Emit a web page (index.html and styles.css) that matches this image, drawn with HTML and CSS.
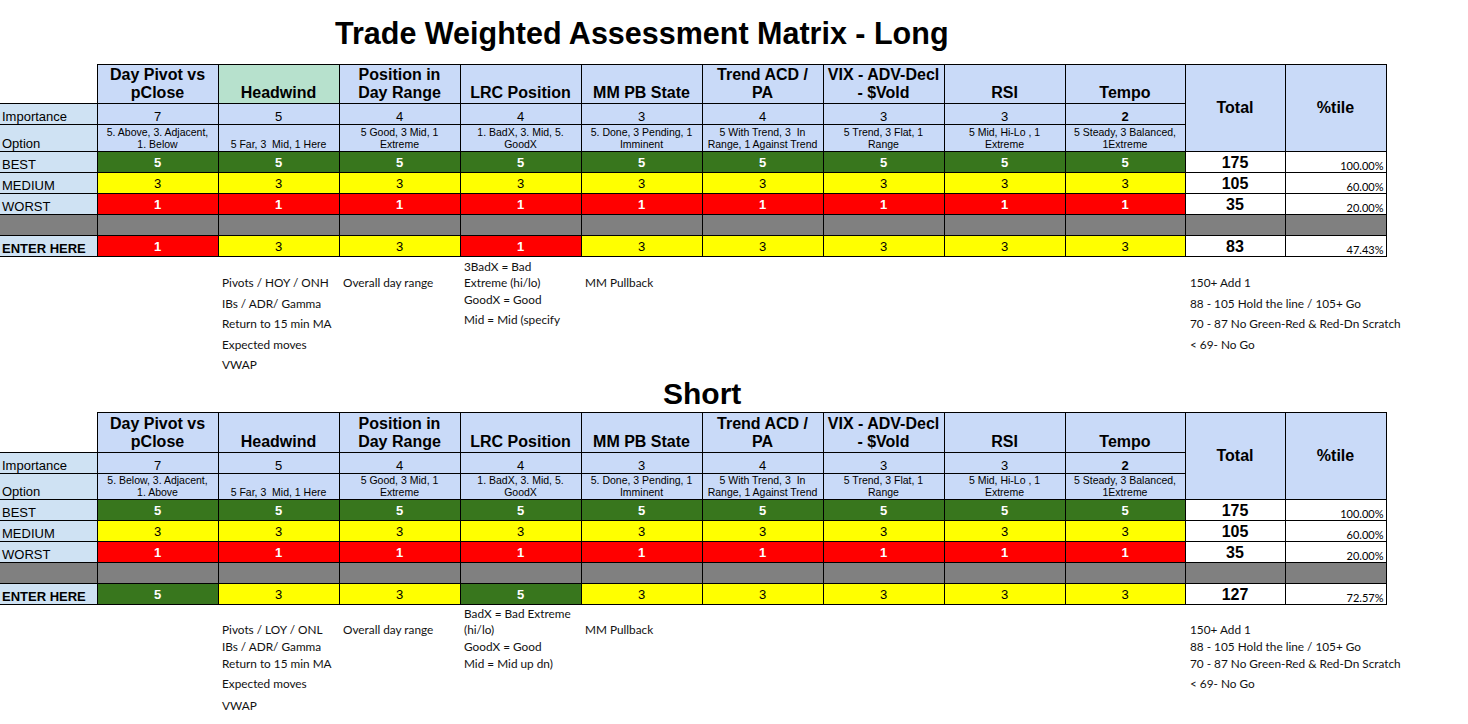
FILE: index.html
```html
<!DOCTYPE html>
<html lang="en">
<head>
<meta charset="utf-8">
<title>Trade Weighted Assessment Matrix</title>
<link rel="stylesheet" href="styles.css">
</head>
<body>
<h1 class="title title-long">Trade Weighted Assessment Matrix - Long</h1>

<table class="matrix">
  <colgroup>
    <col class="c-label"><col class="c-data"><col class="c-data"><col class="c-data"><col class="c-data"><col class="c-data"><col class="c-data"><col class="c-data"><col class="c-data"><col class="c-tempo"><col class="c-total"><col class="c-pct">
  </colgroup>
  <tr class="r-head">
    <th class="corner"></th>
    <th>Day Pivot vs<br>pClose</th>
    <th class="head-green">Headwind</th>
    <th>Position in<br>Day Range</th>
    <th>LRC Position</th>
    <th>MM PB State</th>
    <th>Trend ACD /<br>PA</th>
    <th>VIX - ADV-Decl<br>- $Vold</th>
    <th>RSI</th>
    <th>Tempo</th>
    <th class="tot-head" rowspan="3">Total</th>
    <th class="tot-head" rowspan="3">%tile</th>
  </tr>
  <tr class="r-imp">
    <td class="lbl">Importance</td>
    <td>7</td><td>5</td><td>4</td><td>4</td><td>3</td><td>4</td><td>3</td><td>3</td><td class="strong">2</td>
  </tr>
  <tr class="r-opt">
    <td class="lbl">Option</td>
    <td>5. Above, 3. Adjacent,<br>1. Below</td>
    <td>5 Far, 3&nbsp; Mid, 1 Here</td>
    <td>5 Good, 3 Mid, 1<br>Extreme</td>
    <td>1. BadX, 3. Mid, 5.<br>GoodX</td>
    <td>5. Done, 3 Pending, 1<br>Imminent</td>
    <td>5 With Trend, 3&nbsp; In<br>Range, 1 Against Trend</td>
    <td>5 Trend, 3 Flat, 1<br>Range</td>
    <td>5 Mid, Hi-Lo , 1<br>Extreme</td>
    <td>5 Steady, 3 Balanced,<br>1Extreme</td>
  </tr>
  <tr class="r-val">
    <td class="lbl">BEST</td>
    <td class="v-g">5</td><td class="v-g">5</td><td class="v-g">5</td><td class="v-g">5</td><td class="v-g">5</td><td class="v-g">5</td><td class="v-g">5</td><td class="v-g">5</td><td class="v-g">5</td>
    <td class="tot">175</td><td class="pct">100.00%</td>
  </tr>
  <tr class="r-val">
    <td class="lbl">MEDIUM</td>
    <td class="v-y">3</td><td class="v-y">3</td><td class="v-y">3</td><td class="v-y">3</td><td class="v-y">3</td><td class="v-y">3</td><td class="v-y">3</td><td class="v-y">3</td><td class="v-y">3</td>
    <td class="tot">105</td><td class="pct">60.00%</td>
  </tr>
  <tr class="r-val">
    <td class="lbl">WORST</td>
    <td class="v-r">1</td><td class="v-r">1</td><td class="v-r">1</td><td class="v-r">1</td><td class="v-r">1</td><td class="v-r">1</td><td class="v-r">1</td><td class="v-r">1</td><td class="v-r">1</td>
    <td class="tot">35</td><td class="pct">20.00%</td>
  </tr>
  <tr class="r-val r-gray">
    <td></td><td></td><td></td><td></td><td></td><td></td><td></td><td></td><td></td><td></td><td></td><td></td>
  </tr>
  <tr class="r-val">
    <td class="lbl lbl-strong">ENTER HERE</td>
    <td class="v-r">1</td><td class="v-y">3</td><td class="v-y">3</td><td class="v-r">1</td><td class="v-y">3</td><td class="v-y">3</td><td class="v-y">3</td><td class="v-y">3</td><td class="v-y">3</td>
    <td class="tot">83</td><td class="pct">47.43%</td>
  </tr>
</table>

<div class="notes notes-long">
  <div class="note c3 r1">Pivots / HOY / ONH</div>
  <div class="note c3 r2">IBs / ADR/ Gamma</div>
  <div class="note c3 r3">Return to 15 min MA</div>
  <div class="note c3 r4">Expected moves</div>
  <div class="note c3 r5">VWAP</div>
  <div class="note c4 r1">Overall day range</div>
  <div class="note c5 r1">3BadX = Bad<br>Extreme (hi/lo)</div>
  <div class="note c5 r2 lift">GoodX = Good</div>
  <div class="note c5 r3 lift">Mid = Mid (specify</div>
  <div class="note c6 r1">MM Pullback</div>
  <div class="note c11 r1">150+ Add 1</div>
  <div class="note c11 r2">88 - 105 Hold the line / 105+ Go</div>
  <div class="note c11 r3">70 - 87 No Green-Red &amp; Red-Dn Scratch</div>
  <div class="note c11 r4">&lt; 69- No Go</div>
</div>

<h2 class="title title-short">Short</h2>

<table class="matrix">
  <colgroup>
    <col class="c-label"><col class="c-data"><col class="c-data"><col class="c-data"><col class="c-data"><col class="c-data"><col class="c-data"><col class="c-data"><col class="c-data"><col class="c-tempo"><col class="c-total"><col class="c-pct">
  </colgroup>
  <tr class="r-head r-head-short">
    <th class="corner"></th>
    <th>Day Pivot vs<br>pClose</th>
    <th>Headwind</th>
    <th>Position in<br>Day Range</th>
    <th>LRC Position</th>
    <th>MM PB State</th>
    <th>Trend ACD /<br>PA</th>
    <th>VIX - ADV-Decl<br>- $Vold</th>
    <th>RSI</th>
    <th>Tempo</th>
    <th class="tot-head" rowspan="3">Total</th>
    <th class="tot-head" rowspan="3">%tile</th>
  </tr>
  <tr class="r-imp">
    <td class="lbl">Importance</td>
    <td>7</td><td>5</td><td>4</td><td>4</td><td>3</td><td>4</td><td>3</td><td>3</td><td class="strong">2</td>
  </tr>
  <tr class="r-opt r-opt-short">
    <td class="lbl">Option</td>
    <td>5. Below, 3. Adjacent,<br>1. Above</td>
    <td>5 Far, 3&nbsp; Mid, 1 Here</td>
    <td>5 Good, 3 Mid, 1<br>Extreme</td>
    <td>1. BadX, 3. Mid, 5.<br>GoodX</td>
    <td>5. Done, 3 Pending, 1<br>Imminent</td>
    <td>5 With Trend, 3&nbsp; In<br>Range, 1 Against Trend</td>
    <td>5 Trend, 3 Flat, 1<br>Range</td>
    <td>5 Mid, Hi-Lo , 1<br>Extreme</td>
    <td>5 Steady, 3 Balanced,<br>1Extreme</td>
  </tr>
  <tr class="r-val">
    <td class="lbl">BEST</td>
    <td class="v-g">5</td><td class="v-g">5</td><td class="v-g">5</td><td class="v-g">5</td><td class="v-g">5</td><td class="v-g">5</td><td class="v-g">5</td><td class="v-g">5</td><td class="v-g">5</td>
    <td class="tot">175</td><td class="pct">100.00%</td>
  </tr>
  <tr class="r-val">
    <td class="lbl">MEDIUM</td>
    <td class="v-y">3</td><td class="v-y">3</td><td class="v-y">3</td><td class="v-y">3</td><td class="v-y">3</td><td class="v-y">3</td><td class="v-y">3</td><td class="v-y">3</td><td class="v-y">3</td>
    <td class="tot">105</td><td class="pct">60.00%</td>
  </tr>
  <tr class="r-val">
    <td class="lbl">WORST</td>
    <td class="v-r">1</td><td class="v-r">1</td><td class="v-r">1</td><td class="v-r">1</td><td class="v-r">1</td><td class="v-r">1</td><td class="v-r">1</td><td class="v-r">1</td><td class="v-r">1</td>
    <td class="tot">35</td><td class="pct">20.00%</td>
  </tr>
  <tr class="r-val r-gray">
    <td></td><td></td><td></td><td></td><td></td><td></td><td></td><td></td><td></td><td></td><td></td><td></td>
  </tr>
  <tr class="r-val">
    <td class="lbl lbl-strong">ENTER HERE</td>
    <td class="v-g">5</td><td class="v-y">3</td><td class="v-y">3</td><td class="v-g">5</td><td class="v-y">3</td><td class="v-y">3</td><td class="v-y">3</td><td class="v-y">3</td><td class="v-y">3</td>
    <td class="tot">127</td><td class="pct">72.57%</td>
  </tr>
</table>

<div class="notes notes-short">
  <div class="note c3 r1">Pivots / LOY / ONL</div>
  <div class="note c3 r2">IBs / ADR/ Gamma</div>
  <div class="note c3 r3">Return to 15 min MA</div>
  <div class="note c3 r4">Expected moves</div>
  <div class="note c3 r5">VWAP</div>
  <div class="note c4 r1">Overall day range</div>
  <div class="note c5 r1">BadX = Bad Extreme<br>(hi/lo)</div>
  <div class="note c5 r2">GoodX = Good</div>
  <div class="note c5 r3">Mid = Mid up dn)</div>
  <div class="note c6 r1">MM Pullback</div>
  <div class="note c11 r1">150+ Add 1</div>
  <div class="note c11 r2">88 - 105 Hold the line / 105+ Go</div>
  <div class="note c11 r3">70 - 87 No Green-Red &amp; Red-Dn Scratch</div>
  <div class="note c11 r4">&lt; 69- No Go</div>
</div>
</body>
</html>
```

FILE: styles.css
```css
html, body {
  margin: 0;
  padding: 0;
  background: #ffffff;
  color: #000000;
  font-family: "Liberation Sans", Arial, sans-serif;
}

.title {
  margin: 0;
  font-family: "Liberation Sans", Arial, sans-serif;
  font-weight: bold;
  line-height: 34px;
  white-space: nowrap;
}

.title-long {
  font-size: 30.5px;
  padding: 16px 0 14px 335px;
}

.title-short {
  font-size: 30px;
  padding: 3px 0 1px 663px;
}

/* ---------- matrix table ---------- */
.matrix {
  border-collapse: collapse;
  table-layout: fixed;
  width: 1386px;
  font-size: 13px;
}

.c-label { width: 97px; }
.c-data { width: 121px; }
.c-tempo { width: 120px; }
.c-total { width: 100px; }
.c-pct { width: 101px; }

.matrix th,
.matrix td {
  border: 1px solid #000;
  padding: 0;
  overflow: hidden;
  white-space: nowrap;
  text-align: center;
}

.matrix th {
  background: #c9daf8;
  font-size: 16px;
  font-weight: bold;
  line-height: 18px;
  vertical-align: bottom;
  padding-bottom: 1px;
}

.matrix th.corner {
  background: #ffffff;
  border-top: none;
  border-left: none;
}

.matrix th.head-green {
  background: #b7e1cd;
}

.matrix th.tot-head {
  vertical-align: middle;
  padding-bottom: 0;
}

.r-head { height: 39px; }
.r-head-short { height: 40px; }

.r-imp { height: 21px; }
.r-imp td {
  background: #c9daf8;
  line-height: 15px;
  vertical-align: bottom;
}
.r-imp td.strong { font-weight: bold; }

.r-opt { height: 27px; }
.r-opt-short { height: 26px; }
.r-opt td {
  background: #c9daf8;
  font-size: 10.5px;
  line-height: 12px;
  vertical-align: bottom;
  padding-bottom: 1px;
}

.r-val { height: 21px; }
.r-val td {
  vertical-align: middle;
  line-height: 15px;
}

.matrix td.lbl {
  background: #cfe2f3;
  text-align: left;
  padding-left: 2px;
  padding-bottom: 0;
  border-left: none;
  font-size: 13px;
  line-height: 15px;
  vertical-align: bottom;
}

.matrix td.lbl-strong { font-weight: bold; }

.matrix td.v-g {
  background: #38761d;
  color: #ffffff;
  font-weight: bold;
}

.matrix td.v-y {
  background: #ffff00;
  color: #000000;
}

.matrix td.v-r {
  background: #ff0000;
  color: #ffffff;
  font-weight: bold;
}

.matrix .r-gray td {
  background: #808080;
}
.matrix .r-gray td:first-child { border-left: none; }

.matrix td.tot {
  background: #ffffff;
  font-size: 16px;
  font-weight: bold;
  line-height: 18px;
  vertical-align: bottom;
}

.matrix td.pct {
  background: #ffffff;
  font-family: Lato, "Open Sans", sans-serif;
  font-size: 11px;
  line-height: 13px;
  text-align: right;
  padding-right: 2px;
  vertical-align: bottom;
}

/* ---------- notes grid ---------- */
.notes {
  display: grid;
  grid-template-columns: 97px repeat(8, 121px) 120px 100px 100px;
  font-family: Lato, "Open Sans", sans-serif;
  font-size: 11.8px;
  color: #111;
}

.notes-long { grid-template-rows: 35px 21px 20px 21px 20px; }
.notes-short { grid-template-rows: 34px 17px 17px 20px 22px; }

.note {
  align-self: end;
  white-space: nowrap;
  line-height: 16px;
  padding-left: 4px;
  padding-bottom: 1px;
}

.note.lift { padding-bottom: 5px; }

.c3 { grid-column: 3; }
.c4 { grid-column: 4; }
.c5 { grid-column: 5; }
.c6 { grid-column: 6; }
.c11 { grid-column: 11 / span 2; padding-left: 5px; }

.r1 { grid-row: 1; }
.r2 { grid-row: 2; }
.r3 { grid-row: 3; }
.r4 { grid-row: 4; }
.r5 { grid-row: 5; }
```
